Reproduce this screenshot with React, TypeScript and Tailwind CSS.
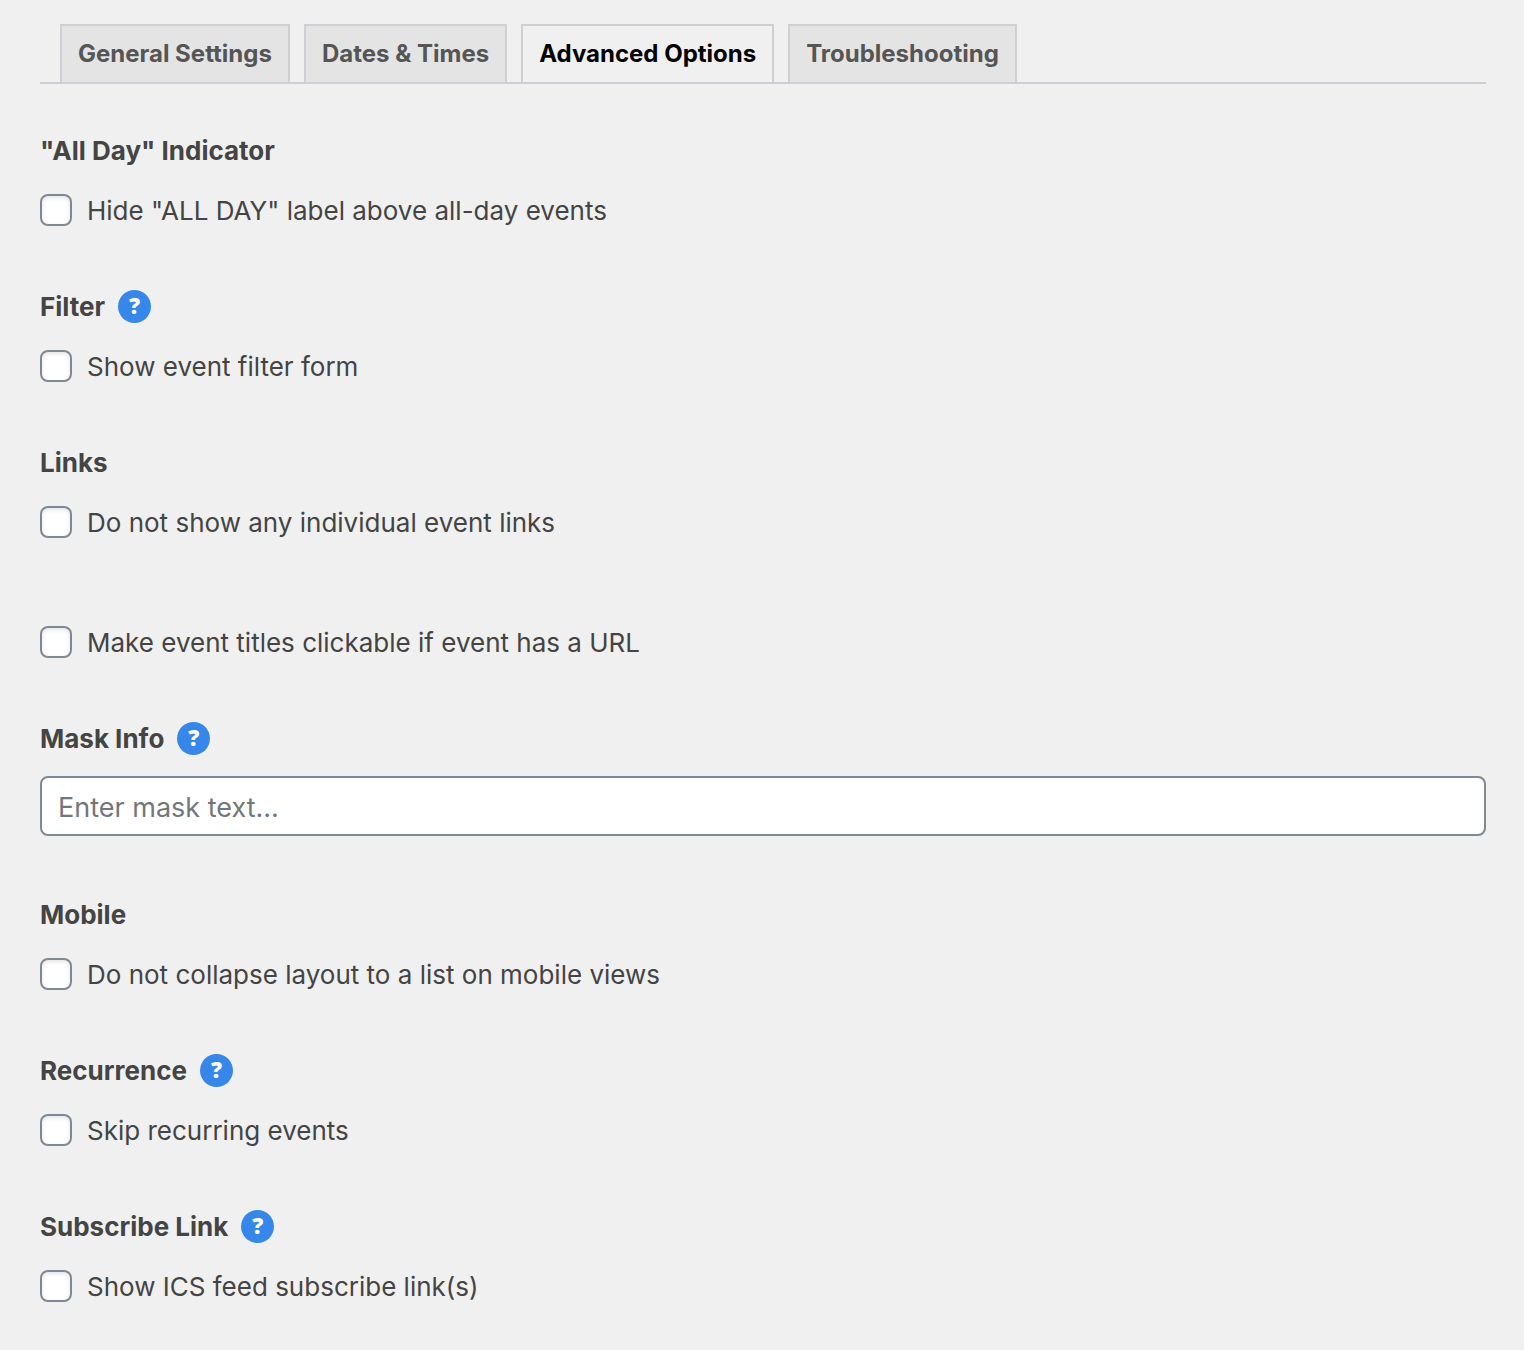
import { useState } from 'react';

const tabs = ['General Settings', 'Dates & Times', 'Advanced Options', 'Troubleshooting'];

type Option = { id: string; label: string };
type Section = { title: string; help?: string; options?: Option[] };

const sections: Section[] = [
  { title: '"All Day" Indicator', options: [{ id: 'hide-all-day', label: 'Hide "ALL DAY" label above all-day events' }] },
  { title: 'Filter', help: 'filter', options: [{ id: 'filter-form', label: 'Show event filter form' }] },
  {
    title: 'Links',
    options: [
      { id: 'no-links', label: 'Do not show any individual event links' },
      { id: 'title-links', label: 'Make event titles clickable if event has a URL' },
    ],
  },
  { title: 'Mask Info', help: 'mask' },
  { title: 'Mobile', options: [{ id: 'no-collapse', label: 'Do not collapse layout to a list on mobile views' }] },
  { title: 'Recurrence', help: 'recurrence', options: [{ id: 'skip-recurring', label: 'Skip recurring events' }] },
  { title: 'Subscribe Link', help: 'subscribe', options: [{ id: 'ics-link', label: 'Show ICS feed subscribe link(s)' }] },
];

function HelpButton({ topic }: { topic: string }) {
  return (
    <button
      type="button"
      aria-label={`Help: ${topic}`}
      className="flex size-[33px] items-center justify-center rounded-full bg-[#3787eb] pb-[3px] font-['Open_Sans',sans-serif] text-[22px] leading-none font-extrabold text-white"
    >
      ?
    </button>
  );
}

function CheckRow({ option }: { option: Option }) {
  return (
    <div className="flex items-start gap-[15px]">
      <input
        id={option.id}
        type="checkbox"
        className="size-8 shrink-0 appearance-none rounded-lg border-2 border-[#7e8993] bg-white shadow-[inset_0_2px_4px_rgba(0,0,0,0.1)] checked:bg-[#3787eb]"
      />
      <label htmlFor={option.id} className="text-[26px] leading-[34px]">
        {option.label}
      </label>
    </div>
  );
}

export default function App() {
  const [active, setActive] = useState('Advanced Options');

  return (
    <div className="min-h-screen bg-[#f0f0f0] pt-6 pr-[38px] pb-12 pl-10 font-['Inter',sans-serif] text-[#444]">
      <nav className="flex gap-[14px] border-b-2 border-[#ccd0d4] pl-5">
        {tabs.map((tab) => (
          <button
            key={tab}
            type="button"
            onClick={() => setActive(tab)}
            className={
              tab === active
                ? 'h-[58px] border-2 border-b-0 border-[#ccd0d4] bg-[#f0f0f0] px-4 text-[24px] font-bold text-black'
                : 'h-[58px] border-2 border-b-0 border-[#ccd0d4] bg-[#e4e4e4] px-4 text-[24px] font-bold text-[#555]'
            }
          >
            {tab}
          </button>
        ))}
      </nav>

      <form className="flex flex-col gap-[62px] pt-[50px]">
        {sections.map((section) => (
          <section key={section.title}>
            <div className="flex h-[33px] items-center gap-[13px]">
              <h2 className="text-[26px] font-bold">{section.title}</h2>
              {section.help && <HelpButton topic={section.help} />}
            </div>
            {section.options ? (
              <div className="mt-[27px] flex flex-col gap-[86px]">
                {section.options.map((option) => (
                  <CheckRow key={option.id} option={option} />
                ))}
              </div>
            ) : (
              <input
                type="text"
                aria-label={section.title}
                placeholder="Enter mask text..."
                className="mt-[21px] block h-[60px] w-full rounded-lg border-2 border-[#7e8993] bg-white px-4 pt-[2px] text-[27px] placeholder:text-[#72777c]"
              />
            )}
          </section>
        ))}
      </form>
    </div>
  );
}
